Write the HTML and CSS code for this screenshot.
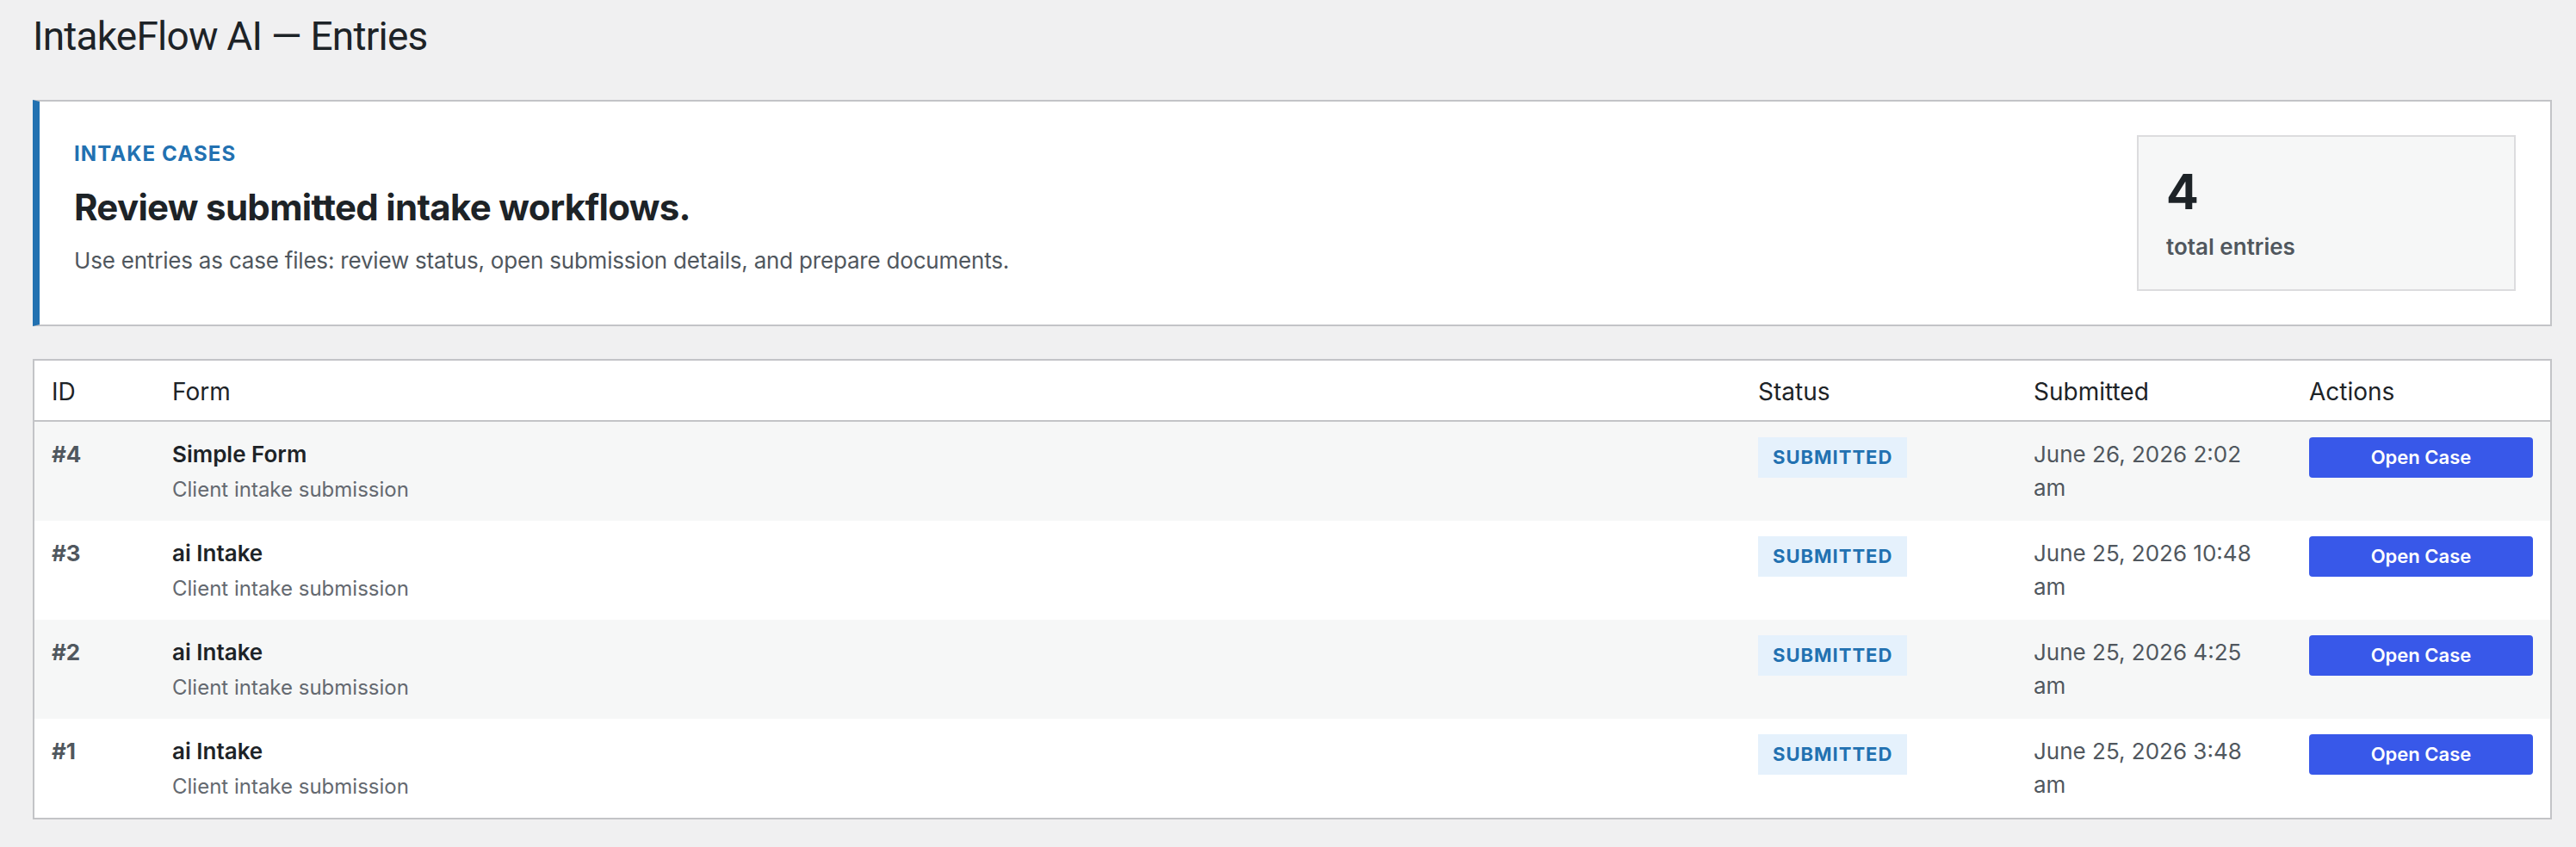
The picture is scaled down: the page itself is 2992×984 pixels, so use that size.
FILE: index.html
```html
<!DOCTYPE html>
<html lang="en">
<head>
    <meta charset="UTF-8">
    <meta name="viewport" content="width=device-width, initial-scale=1.0">
    <title>IntakeFlow AI — Entries</title>
    <link rel="stylesheet" href="styles.css">
</head>
<body>
    <div class="wrap">
        <h1>IntakeFlow AI — Entries</h1>

        <section class="intro">
            <div class="intro-text">
                <p class="eyebrow">Intake cases</p>
                <h2>Review submitted intake workflows.</h2>
                <p class="lead">Use entries as case files: review status, open submission details, and prepare documents.</p>
            </div>
            <div class="stat">
                <span class="stat-num">4</span>
                <span class="stat-label">total entries</span>
            </div>
        </section>

        <table class="entries">
            <colgroup>
                <col class="col-id">
                <col>
                <col class="col-status">
                <col class="col-date">
                <col class="col-actions">
            </colgroup>
            <thead>
                <tr>
                    <th>ID</th>
                    <th>Form</th>
                    <th>Status</th>
                    <th>Submitted</th>
                    <th>Actions</th>
                </tr>
            </thead>
            <tbody>
                <tr>
                    <td class="id">#4</td>
                    <td><strong class="form-name">Simple Form</strong><span class="form-sub">Client intake submission</span></td>
                    <td><span class="badge">Submitted</span></td>
                    <td class="date">June 26, 2026 2:02 am</td>
                    <td><a class="btn" href="#">Open Case</a></td>
                </tr>
                <tr>
                    <td class="id">#3</td>
                    <td><strong class="form-name">ai Intake</strong><span class="form-sub">Client intake submission</span></td>
                    <td><span class="badge">Submitted</span></td>
                    <td class="date">June 25, 2026 10:48 am</td>
                    <td><a class="btn" href="#">Open Case</a></td>
                </tr>
                <tr>
                    <td class="id">#2</td>
                    <td><strong class="form-name">ai Intake</strong><span class="form-sub">Client intake submission</span></td>
                    <td><span class="badge">Submitted</span></td>
                    <td class="date">June 25, 2026 4:25 am</td>
                    <td><a class="btn" href="#">Open Case</a></td>
                </tr>
                <tr>
                    <td class="id">#1</td>
                    <td><strong class="form-name">ai Intake</strong><span class="form-sub">Client intake submission</span></td>
                    <td><span class="badge">Submitted</span></td>
                    <td class="date">June 25, 2026 3:48 am</td>
                    <td><a class="btn" href="#">Open Case</a></td>
                </tr>
            </tbody>
        </table>
    </div>
</body>
</html>
```

FILE: styles.css
```css
body {
    margin: 0;
    background: #f0f0f1;
    color: #1d2327;
    font-family: Inter, Roboto, "Liberation Sans", Arial, sans-serif;
    font-size: 26px;
    line-height: 1.5;
}
.wrap {
    padding: 12px 28px 0 38px;
}
h1 {
    margin: 0 0 44px;
    font-family: Roboto, "Liberation Sans", Arial, sans-serif;
    font-size: 46px;
    font-weight: 400;
    line-height: 60px;
    letter-spacing: -0.8px;
}

/* intro card */
.intro {
    display: flex;
    align-items: center;
    justify-content: space-between;
    background: #fff;
    border: 2px solid #c3c4c7;
    border-left: 8px solid #2271b1;
    padding: 39px 40px;
}
.intro-text {
    padding-bottom: 9px;
}
.eyebrow {
    margin: 0;
    color: #2271b1;
    font-size: 24px;
    font-weight: 700;
    line-height: 29px;
    letter-spacing: 1.1px;
    text-transform: uppercase;
}
h2 {
    margin: 23px 0 0;
    font-size: 42px;
    font-weight: 700;
    line-height: 50px;
    letter-spacing: -0.7px;
}
.lead {
    margin: 17px 0 0;
    color: #50575e;
    line-height: 39px;
    letter-spacing: -0.2px;
}
.stat {
    display: flex;
    flex-direction: column;
    width: 440px;
    box-sizing: border-box;
    padding: 36px 32px 30px;
    background: #f6f7f7;
    border: 2px solid #dcdcde;
}
.stat-num {
    font-size: 56px;
    font-weight: 700;
    line-height: 56px;
}
.stat-label {
    margin-top: 16px;
    color: #50575e;
    font-weight: 600;
    line-height: 39px;
}

/* entries table */
.entries {
    width: 100%;
    margin-top: 38px;
    table-layout: fixed;
    border-collapse: separate;
    border-spacing: 0;
    background: #fff;
    border: 2px solid #c3c4c7;
}
.col-id { width: 140px; }
.col-status { width: 320px; }
.col-date { width: 320px; }
.col-actions { width: 300px; }
th {
    padding: 18px 20px 14px;
    font-size: 28px;
    font-weight: 400;
    line-height: 37px;
    text-align: left;
    border-bottom: 2px solid #c3c4c7;
}
td {
    padding: 18px 20px 19px;
    vertical-align: top;
    color: #50575e;
    line-height: 39px;
}
tbody tr:nth-child(odd) {
    background: #f6f7f7;
}
.id {
    font-weight: 700;
}
.form-name {
    display: block;
    color: #1d2327;
    font-weight: 600;
}
.form-sub {
    display: block;
    margin-top: 5px;
    color: #646970;
    font-size: 24px;
    line-height: 34px;
}
.badge {
    display: inline-block;
    vertical-align: top;
    padding: 0 17px;
    background: #e5f1fc;
    color: #2271b1;
    font-size: 22px;
    font-weight: 700;
    line-height: 47px;
    letter-spacing: 1px;
    text-transform: uppercase;
}
.btn {
    display: block;
    height: 47px;
    background: #3858e9;
    border-radius: 4px;
    color: #fff;
    font-size: 22px;
    font-weight: 600;
    line-height: 47px;
    text-align: center;
    text-decoration: none;
}
```
